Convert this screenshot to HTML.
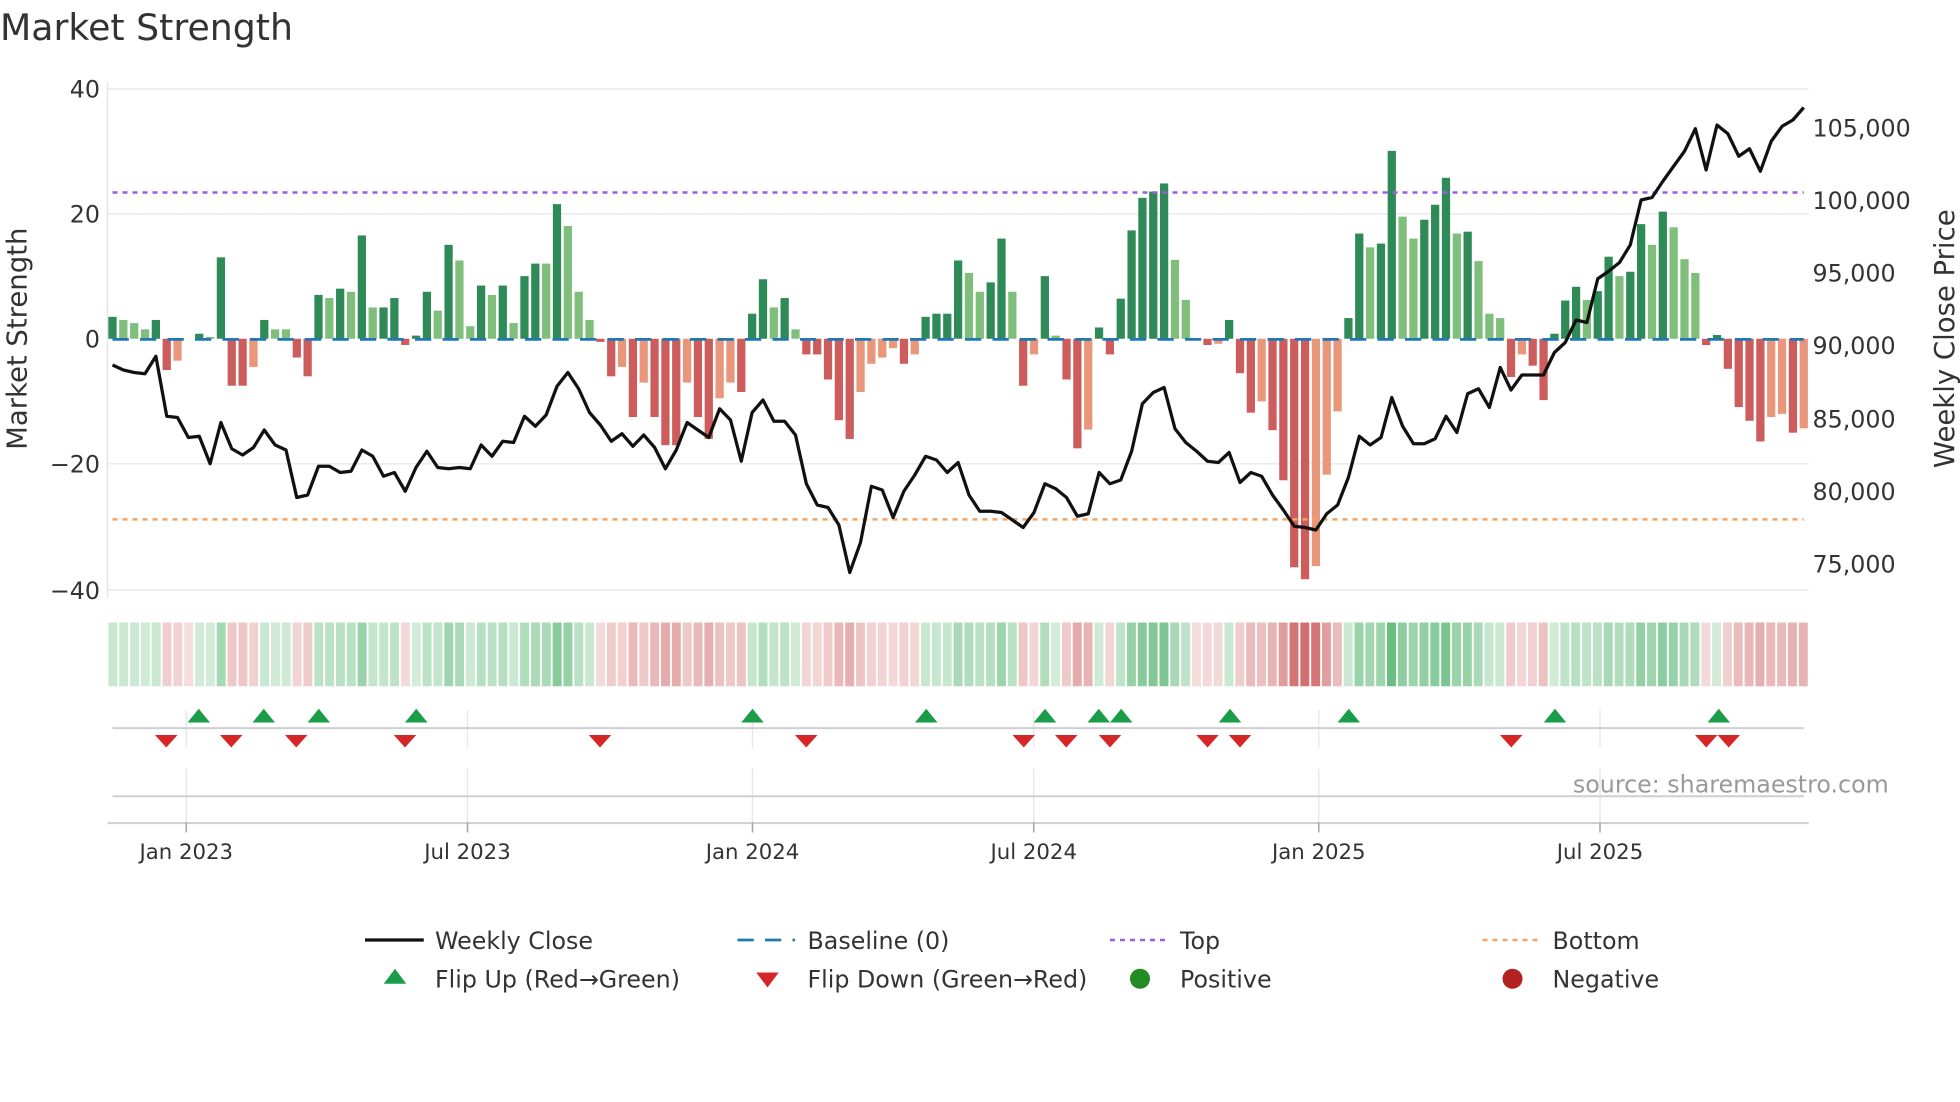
<!DOCTYPE html>
<html><head><meta charset="utf-8">
<style>
html,body{margin:0;padding:0;background:#fff;}
svg{display:block;}
text{font-family:"DejaVu Sans","Liberation Sans",sans-serif;fill:#333;}
</style></head>
<body>
<svg id="s" width="1960" height="1102" viewBox="0 0 1568 881.6" xmlns="http://www.w3.org/2000/svg">
<text x="0" y="32" font-size="29">Market Strength</text>
<g stroke="#ececef" stroke-width="1.3">
<line x1="86" y1="71" x2="1447" y2="71"/>
<line x1="86" y1="171" x2="1447" y2="171"/>
<line x1="86" y1="371" x2="1447" y2="371"/>
<line x1="86" y1="472" x2="1447" y2="472"/>
</g>
<line x1="86" y1="66" x2="86" y2="478" stroke="#e6e6ea" stroke-width="1.3"/>
<g font-size="19" text-anchor="end">
<text x="80" y="78">40</text>
<text x="80" y="178">20</text>
<text x="80" y="278">0</text>
<text x="80" y="378">−20</text>
<text x="80" y="479">−40</text>
</g>
<g font-size="19">
<text x="1450" y="109">105,000</text>
<text x="1450" y="167">100,000</text>
<text x="1450" y="225">95,000</text>
<text x="1450" y="283">90,000</text>
<text x="1450" y="342">85,000</text>
<text x="1450" y="400">80,000</text>
<text x="1450" y="458">75,000</text>
</g>
<text transform="translate(21,271) rotate(-90)" font-size="22" text-anchor="middle">Market Strength</text>
<text transform="translate(1563,271) rotate(-90)" font-size="22" text-anchor="middle">Weekly Close Price</text>
<g id="bars"></g>
<line x1="90" y1="271.5" x2="1443" y2="271.5" stroke="#1f77b4" stroke-width="2.2" stroke-dasharray="13 9"/>
<line x1="90" y1="154" x2="1443" y2="154" stroke="#9b5de5" stroke-width="2" stroke-dasharray="4 4"/>
<line x1="90" y1="415.5" x2="1443" y2="415.5" stroke="#f4a460" stroke-width="2" stroke-dasharray="4 4"/>
<polyline id="price" fill="none" stroke="#111" stroke-width="2.6" stroke-linejoin="round"/>
<g id="strip"></g>
<g stroke="#e8e8ec" stroke-width="1.2">
<line x1="149" y1="568" x2="149" y2="598"/><line x1="374" y1="568" x2="374" y2="598"/>
<line x1="602" y1="568" x2="602" y2="598"/><line x1="827" y1="568" x2="827" y2="598"/>
<line x1="1055" y1="568" x2="1055" y2="598"/><line x1="1280" y1="568" x2="1280" y2="598"/>
<line x1="149" y1="615" x2="149" y2="658"/><line x1="374" y1="615" x2="374" y2="658"/>
<line x1="602" y1="615" x2="602" y2="658"/><line x1="827" y1="615" x2="827" y2="658"/>
<line x1="1055" y1="615" x2="1055" y2="658"/><line x1="1280" y1="615" x2="1280" y2="658"/>
</g>
<line x1="90" y1="582.5" x2="1443" y2="582.5" stroke="#cfcfd3" stroke-width="1.6"/>
<line x1="90" y1="637" x2="1443" y2="637" stroke="#cfcfd3" stroke-width="1.6"/>
<line x1="86" y1="658.5" x2="1447" y2="658.5" stroke="#cfcfd3" stroke-width="1.6"/>
<g stroke="#aaa" stroke-width="1.3">
<line x1="149" y1="658" x2="149" y2="666"/><line x1="374" y1="658" x2="374" y2="666"/>
<line x1="602" y1="658" x2="602" y2="666"/><line x1="827" y1="658" x2="827" y2="666"/>
<line x1="1055" y1="658" x2="1055" y2="666"/><line x1="1280" y1="658" x2="1280" y2="666"/>
</g>
<g id="flips"></g>
<g font-size="17" text-anchor="middle">
<text x="149" y="687">Jan 2023</text><text x="374" y="687">Jul 2023</text>
<text x="602" y="687">Jan 2024</text><text x="827" y="687">Jul 2024</text>
<text x="1055" y="687">Jan 2025</text><text x="1280" y="687">Jul 2025</text>
</g>
<text x="1511" y="634" font-size="19" text-anchor="end" style="fill:#999">source: sharemaestro.com</text>
<g font-size="19">
<line x1="292" y1="752" x2="339" y2="752" stroke="#111" stroke-width="2.6"/>
<text x="348" y="759">Weekly Close</text>
<line x1="590" y1="752" x2="636" y2="752" stroke="#1f77b4" stroke-width="2.2" stroke-dasharray="13 9"/>
<text x="646" y="759">Baseline (0)</text>
<line x1="888" y1="752" x2="934" y2="752" stroke="#9b5de5" stroke-width="2" stroke-dasharray="4 4"/>
<text x="944" y="759">Top</text>
<line x1="1186" y1="752" x2="1232" y2="752" stroke="#f4a460" stroke-width="2" stroke-dasharray="4 4"/>
<text x="1242" y="759">Bottom</text>
<polygon points="307,787 325,787 316,775" fill="#1a9c48"/>
<text x="348" y="790">Flip Up (Red→Green)</text>
<polygon points="605,778 623,778 614,790" fill="#d62728"/>
<text x="646" y="790">Flip Down (Green→Red)</text>
<circle cx="912" cy="783" r="8" fill="#228b22"/>
<text x="944" y="790">Positive</text>
<circle cx="1210" cy="783" r="8" fill="#b22222"/>
<text x="1242" y="790">Negative</text>
</g>
</svg>
<script>
var B=[[3.5,'D'],[3,'L'],[2.5,'L'],[1.5,'L'],[3,'D'],[-5,'R'],[-3.5,'S'],[0,'D'],[0.8,'D'],[0.3,'L'],[13,'D'],[-7.5,'R'],[-7.5,'R'],[-4.5,'S'],[3,'D'],[1.5,'L'],[1.5,'L'],[-3,'R'],[-6,'R'],[7,'D'],[6.5,'L'],[8,'D'],[7.5,'L'],[16.5,'D'],[5,'L'],[5,'D'],[6.5,'D'],[-1,'R'],[0.5,'D'],[7.5,'D'],[4.5,'L'],[15,'D'],[12.5,'L'],[2,'L'],[8.5,'D'],[7,'L'],[8.5,'D'],[2.5,'L'],[10,'D'],[12,'D'],[12,'L'],[21.5,'D'],[18,'L'],[7.5,'L'],[3,'L'],[-0.5,'R'],[-6,'R'],[-4.5,'S'],[-12.5,'R'],[-7,'S'],[-12.5,'R'],[-17,'R'],[-17,'R'],[-7,'S'],[-12.5,'R'],[-16,'R'],[-9.5,'S'],[-7,'S'],[-8.5,'R'],[4,'D'],[9.5,'D'],[5,'L'],[6.5,'D'],[1.5,'L'],[-2.5,'R'],[-2.5,'R'],[-6.5,'R'],[-13,'R'],[-16,'R'],[-8.5,'S'],[-4,'S'],[-3,'S'],[-1.5,'S'],[-4,'R'],[-2.5,'S'],[3.5,'D'],[4,'D'],[4,'D'],[12.5,'D'],[10.5,'L'],[7.5,'L'],[9,'D'],[16,'D'],[7.5,'L'],[-7.5,'R'],[-2.5,'S'],[10,'D'],[0.5,'L'],[-6.5,'R'],[-17.5,'R'],[-14.5,'S'],[1.8,'D'],[-2.5,'R'],[6.4,'D'],[17.3,'D'],[22.5,'D'],[23.5,'D'],[24.8,'D'],[12.6,'L'],[6.2,'L'],[0,'D'],[-1,'R'],[-0.8,'S'],[3,'D'],[-5.5,'R'],[-11.8,'R'],[-10,'S'],[-14.6,'R'],[-22.6,'R'],[-36.5,'R'],[-38.4,'R'],[-36.3,'S'],[-21.7,'S'],[-11.6,'S'],[3.3,'D'],[16.8,'D'],[14.6,'L'],[15.2,'D'],[30,'D'],[19.5,'L'],[16,'L'],[19,'D'],[21.4,'D'],[25.7,'D'],[16.8,'L'],[17.1,'D'],[12.4,'L'],[4,'L'],[3.3,'L'],[-6.1,'R'],[-2.5,'S'],[-4.3,'R'],[-9.8,'R'],[0.8,'D'],[6.1,'D'],[8.3,'D'],[6.2,'L'],[7.6,'D'],[13.1,'D'],[10,'L'],[10.7,'D'],[18.3,'D'],[15,'L'],[20.3,'D'],[17.8,'L'],[12.7,'L'],[10.5,'L'],[-1,'R'],[0.6,'D'],[-4.8,'R'],[-10.9,'R'],[-13.1,'R'],[-16.4,'R'],[-12.5,'S'],[-12,'S'],[-15,'R'],[-14.3,'S']];
var P=[292,296,298,299,285,333,334,350,349,371,338,359,364,358,344,356,360,398,396,373,373,378,377,360,365,381,378,393,374,361,374,375,374,375,356,365,353,354,333,341,332,309,298,311,330,340,353,347,357,348,358,375,360,338,344,350,327,336,369,330,320,337,337,348,387,404,406,420,458,434,389,392,414,393,380,365,368,378,370,396,409,409,410,416,422,410,387,391,398,413,411,378,387,384,361,323,314,310,343,354,361,369,370,362,386,378,381,396,408,421,422,424,411,404,382,349,356,350,318,341,355,355,351,333,346,315,311,326,294,312,300,300,300,282,274,256,258,223,217,210,196,160,158,145,133,121,103,136,100,107,125,119,137,113,101,96,86];
var C={D:'#2e8b57',L:'#7fbf7b',R:'#cd5c5c',S:'#e9967a'};
var ns='http://www.w3.org/2000/svg';
function el(t,a,p){var e=document.createElementNS(ns,t);for(var k in a)e.setAttribute(k,a[k]);p.appendChild(e);return e;}
var g=document.getElementById('bars'),st=document.getElementById('strip');
var step=(1443-90)/156,pts=[];
for(var i=0;i<B.length;i++){
 var x=90+step*i,v=B[i][0],h=Math.abs(v)*5.01;
 if(h>0.3)el('rect',{x:x-3.3,y:v>0?271-h:271,width:6.6,height:h,fill:C[B[i][1]]},g);
 var a=0.22+0.018*Math.abs(v);
 var col=v>0?'rgba(60,170,90,'+a+')':'rgba(200,80,80,'+(a*0.9)+')';
 el('rect',{x:86+i*(1361/157)+0.7,y:498,width:1361/157-1.5,height:51,fill:col},st);
 pts.push(x.toFixed(1)+','+P[i]);
}
document.getElementById('price').setAttribute('points',pts.join(' '));
var f=document.getElementById('flips');
[159,211,255,333,602,741,836,879,897,984,1079,1244,1375].forEach(function(x){el('polygon',{points:(x-9)+',578 '+(x+9)+',578 '+x+',567',fill:'#1a9c48'},f);});
[133,185,237,324,480,645,819,853,888,966,992,1209,1365,1383].forEach(function(x){el('polygon',{points:(x-9)+',588 '+(x+9)+',588 '+x+',598',fill:'#d62728'},f);});
</script>
</body></html>
